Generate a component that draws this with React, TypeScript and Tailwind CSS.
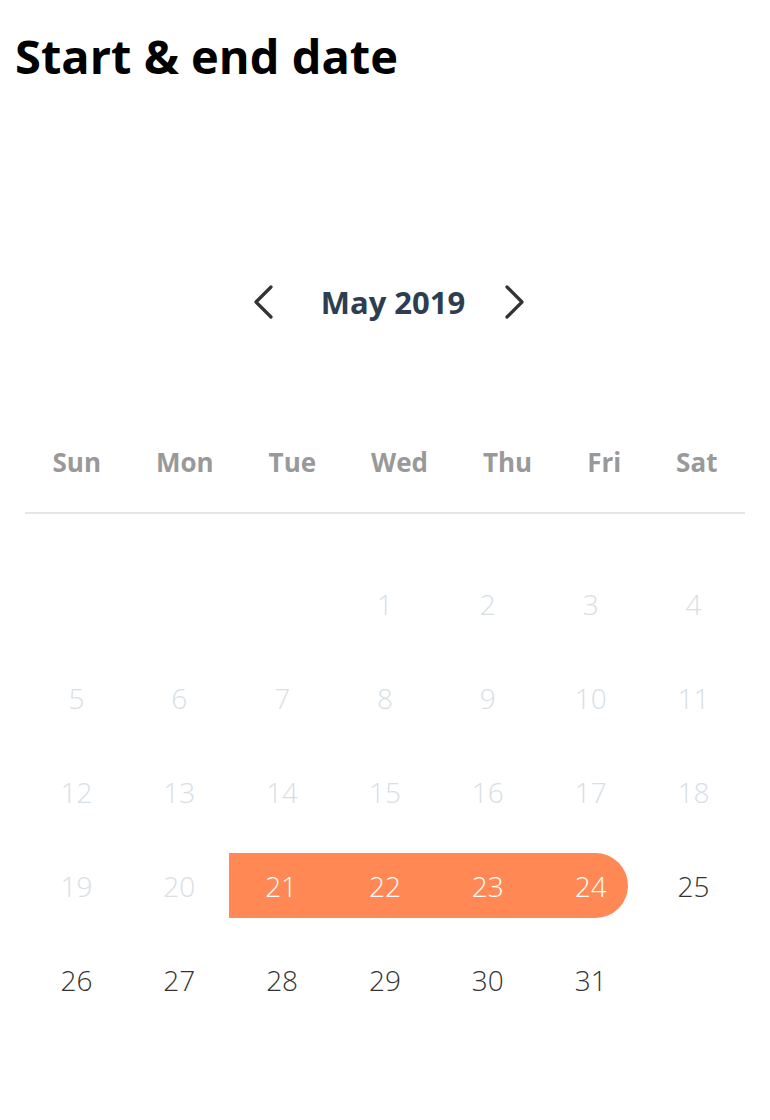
import React from "react";

const ORANGE = "bg-[#ff8855]";

function Chevron({ dir }: { dir: "left" | "right" }) {
  return (
    <svg width="22" height="34" viewBox="0 0 22 34" fill="none" stroke="#333" strokeWidth="3.2" strokeLinecap="round" strokeLinejoin="round">
      {dir === "left" ? <path d="M19 2 L4 17 L19 32" /> : <path d="M3 2 L18 17 L3 32" />}
    </svg>
  );
}

type Cell = { n: number | null; kind: "muted" | "normal" | "range" | "rangeEnd" | "empty" };

export default function App() {
  const days = ["Sun", "Mon", "Tue", "Wed", "Thu", "Fri", "Sat"];
  const cells: Cell[] = [];
  for (let i = 0; i < 3; i++) cells.push({ n: null, kind: "empty" });
  for (let d = 1; d <= 31; d++) {
    let kind: Cell["kind"] = "normal";
    if (d <= 20) kind = "muted";
    else if (d >= 21 && d <= 23) kind = "range";
    else if (d === 24) kind = "rangeEnd";
    cells.push({ n: d, kind });
  }
  while (cells.length < 35) cells.push({ n: null, kind: "empty" });
  const rows: Cell[][] = [];
  for (let i = 0; i < cells.length; i += 7) rows.push(cells.slice(i, i + 7));

  return (
    <div className="w-[770px] h-[1120px] bg-white font-['Open_Sans',sans-serif]">
      <h1 className="pl-[15px] pt-[26px] text-[47px] leading-[60px] font-bold text-black">Start &amp; end date</h1>

      <div className="mt-[196px] pl-[16px] flex items-center justify-center">
        <div className="ml-[-8px]"><Chevron dir="left" /></div>
        <div className="ml-[47px] mr-[39px] text-[31px] font-bold text-[#2c3e50] leading-[40px]">May 2019</div>
        <Chevron dir="right" />
      </div>

      <div className="mx-[25px] mt-[122px]">
        <div className="flex justify-around border-b-2 border-[#e6e6e6] pb-[32px]">
          {days.map((d) => (
            <div key={d} className="text-[26px] font-bold text-[#999] leading-[36px]">
              {d}
            </div>
          ))}
        </div>

        <div className="mt-[57px] flex flex-col gap-[29px]">
          {rows.map((row, ri) => (
            <div key={ri} className="grid grid-cols-7">
              {row.map((c, ci) => {
                const text =
                  c.kind === "muted"
                    ? "text-[#d7dee6]"
                    : c.kind === "range" || c.kind === "rangeEnd"
                    ? "text-white"
                    : "text-[#333]";
                if (c.kind === "range") {
                  return (
                    <div key={ci} className={`h-[65px] flex items-center justify-center ${ORANGE} ${c.n === 21 ? "ml-[-2px]" : ""}`}>
                      <span className={`text-[28px] font-light ${text}`}>{c.n}</span>
                    </div>
                  );
                }
                if (c.kind === "rangeEnd") {
                  return (
                    <div key={ci} className="h-[65px] flex items-center">
                      <div className={`w-[89px] h-[65px] pl-[14px] flex items-center justify-center rounded-r-[33px] ${ORANGE}`}>
                        <span className={`text-[28px] font-light ${text}`}>{c.n}</span>
                      </div>
                    </div>
                  );
                }
                return (
                  <div key={ci} className="h-[65px] flex items-center justify-center">
                    <span className={`text-[28px] font-light ${text}`}>{c.n ?? ""}</span>
                  </div>
                );
              })}
            </div>
          ))}
        </div>
      </div>
    </div>
  );
}
